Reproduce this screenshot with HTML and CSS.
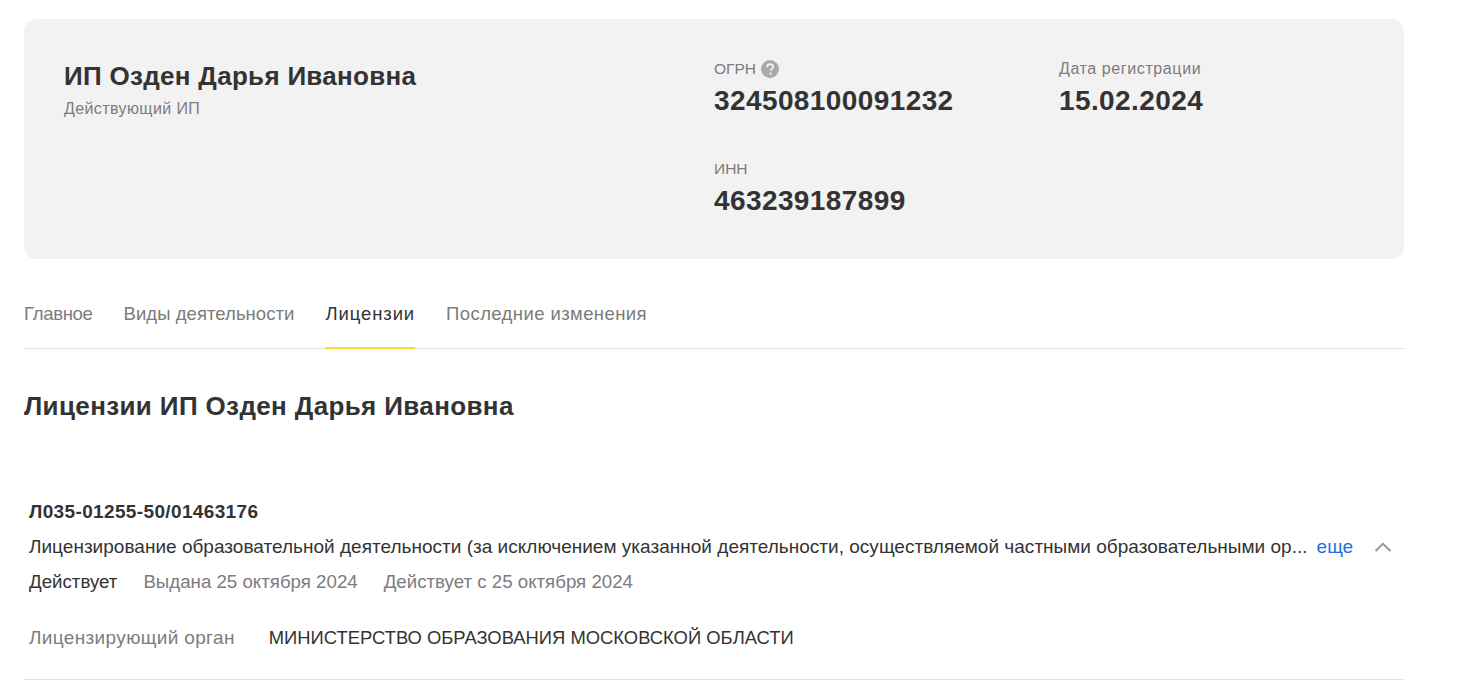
FILE: index.html
```html
<!DOCTYPE html>
<html lang="ru">
<head>
    <meta charset="UTF-8">
    <title>ИП Озден Дарья Ивановна</title>
    <link rel="stylesheet" href="styles.css">
</head>
<body>
    <div class="page">
        <!-- Header card -->
        <div class="card">
            <div class="card-name">
                <h2>ИП Озден Дарья Ивановна</h2>
                <p>Действующий ИП</p>
            </div>
            <div class="card-facts">
                <div class="fact">
                    <div class="fact-label">ОГРН
                        <svg class="help" width="18" height="18" viewBox="0 0 18 18">
                            <circle cx="9" cy="9" r="9" fill="#a9a9a9"/>
                            <path d="M6.1 7.2c0-1.8 1.3-2.9 3-2.9s3 1.1 3 2.6c0 2.1-2.4 2-2.4 3.9" fill="none" stroke="#f1f1f1" stroke-width="1.9"/>
                            <circle cx="9.6" cy="13.6" r="1.2" fill="#f1f1f1"/>
                        </svg>
                    </div>
                    <div class="fact-value">324508100091232</div>
                </div>
                <div class="fact">
                    <div class="fact-label fact-label-long">Дата регистрации</div>
                    <div class="fact-value">15.02.2024</div>
                </div>
                <div class="fact">
                    <div class="fact-label">ИНН</div>
                    <div class="fact-value">463239187899</div>
                </div>
            </div>
        </div>

        <!-- Tabs -->
        <div class="tabs">
            <a class="tab">Главное</a>
            <a class="tab">Виды деятельности</a>
            <a class="tab active">Лицензии</a>
            <a class="tab">Последние изменения</a>
        </div>

        <h1>Лицензии ИП Озден Дарья Ивановна</h1>

        <!-- License item -->
        <div class="license">
            <div class="license-number">Л035-01255-50/01463176</div>
            <div class="license-row">
                <span class="license-text">Лицензирование образовательной деятельности (за исключением указанной деятельности, осуществляемой частными образовательными ор...</span>
                <a class="more">еще</a>
                <svg class="chevron" width="18" height="10" viewBox="0 0 18 10">
                    <path d="M1.5 9 9 1.8 16.5 9" fill="none" stroke="#999" stroke-width="2"/>
                </svg>
            </div>
            <div class="license-status">
                <span class="status-on">Действует</span>
                <span>Выдана 25 октября 2024</span>
                <span>Действует с 25 октября 2024</span>
            </div>
            <div class="license-org">
                <span class="org-label">Лицензирующий орган</span>
                <span class="org-name">МИНИСТЕРСТВО ОБРАЗОВАНИЯ МОСКОВСКОЙ ОБЛАСТИ</span>
            </div>
        </div>
    </div>
</body>
</html>
```

FILE: styles.css
```css
body {
    margin: 0;
    font-family: "Liberation Sans", Arial, sans-serif;
    background-color: #fff;
    color: #333;
    overflow: hidden;
}

.page {
    width: 1380px;
    margin-left: 24px;
    padding-top: 19px;
}

/* Header card */
.card {
    display: flex;
    height: 240px;
    box-sizing: border-box;
    padding: 40px;
    background-color: #f2f2f2;
    border-radius: 12px;
}

.card-name {
    width: 650px;
}

.card-name h2 {
    margin: 1px 0 0;
    font-size: 26px;
    line-height: 32px;
    font-weight: 700;
    letter-spacing: 0.3px;
}

.card-name p {
    margin: 7px 0 0;
    font-size: 16px;
    line-height: 20px;
    letter-spacing: 0.4px;
    color: #7c7c7c;
}

.card-facts {
    display: grid;
    grid-template-columns: 345px 1fr;
    row-gap: 42px;
    align-content: start;
}

.fact-label {
    display: flex;
    align-items: center;
    gap: 5px;
    height: 20px;
    font-size: 15.5px;
    color: #7c7c7c;
}

.fact-label-long {
    font-size: 16px;
    letter-spacing: 0.6px;
}

.fact-value {
    margin-top: 6px;
    font-size: 28px;
    line-height: 32px;
    font-weight: 700;
    letter-spacing: 0.4px;
}

/* Tabs */
.tabs {
    display: flex;
    gap: 31px;
    height: 90px;
    box-sizing: border-box;
    border-bottom: 1px solid #e2e2e2;
}

.tab {
    padding-top: 43px;
    font-size: 18.5px;
    line-height: 24px;
    color: #7c7c7c;
}

.tab:nth-child(1) {
    letter-spacing: -0.3px;
}

.tab:nth-child(2) {
    letter-spacing: 0.05px;
}

.tab:nth-child(4) {
    letter-spacing: 0.4px;
}

.tab.active {
    color: #333;
    letter-spacing: 0.9px;
    border-bottom: 2px solid #ffdd2d;
    margin-bottom: -1px;
}

h1 {
    margin: 41px 0 0;
    font-size: 26px;
    line-height: 32px;
    font-weight: 700;
    letter-spacing: 0.37px;
}

/* License */
.license {
    margin-top: 78px;
    padding: 0 0 29px 5px;
    border-bottom: 1px solid #e2e2e2;
    font-size: 19px;
    line-height: 24px;
}

.license-number {
    font-weight: 700;
    letter-spacing: 0.36px;
}

.license-row {
    display: flex;
    align-items: center;
    margin-top: 11px;
}

.license-text {
    letter-spacing: 0.015px;
}

.more {
    margin-left: 9px;
    color: #1f6fe0;
}

.chevron {
    margin-left: 21px;
}

.license-status {
    display: flex;
    gap: 26px;
    margin-top: 11px;
    font-size: 18.7px;
    color: #7c7c7c;
}

.status-on {
    color: #333;
}

.license-org {
    display: flex;
    gap: 34px;
    margin-top: 32px;
}

.org-label {
    letter-spacing: 0.35px;
    color: #7c7c7c;
}

.org-name {
    font-size: 18.4px;
}
```
